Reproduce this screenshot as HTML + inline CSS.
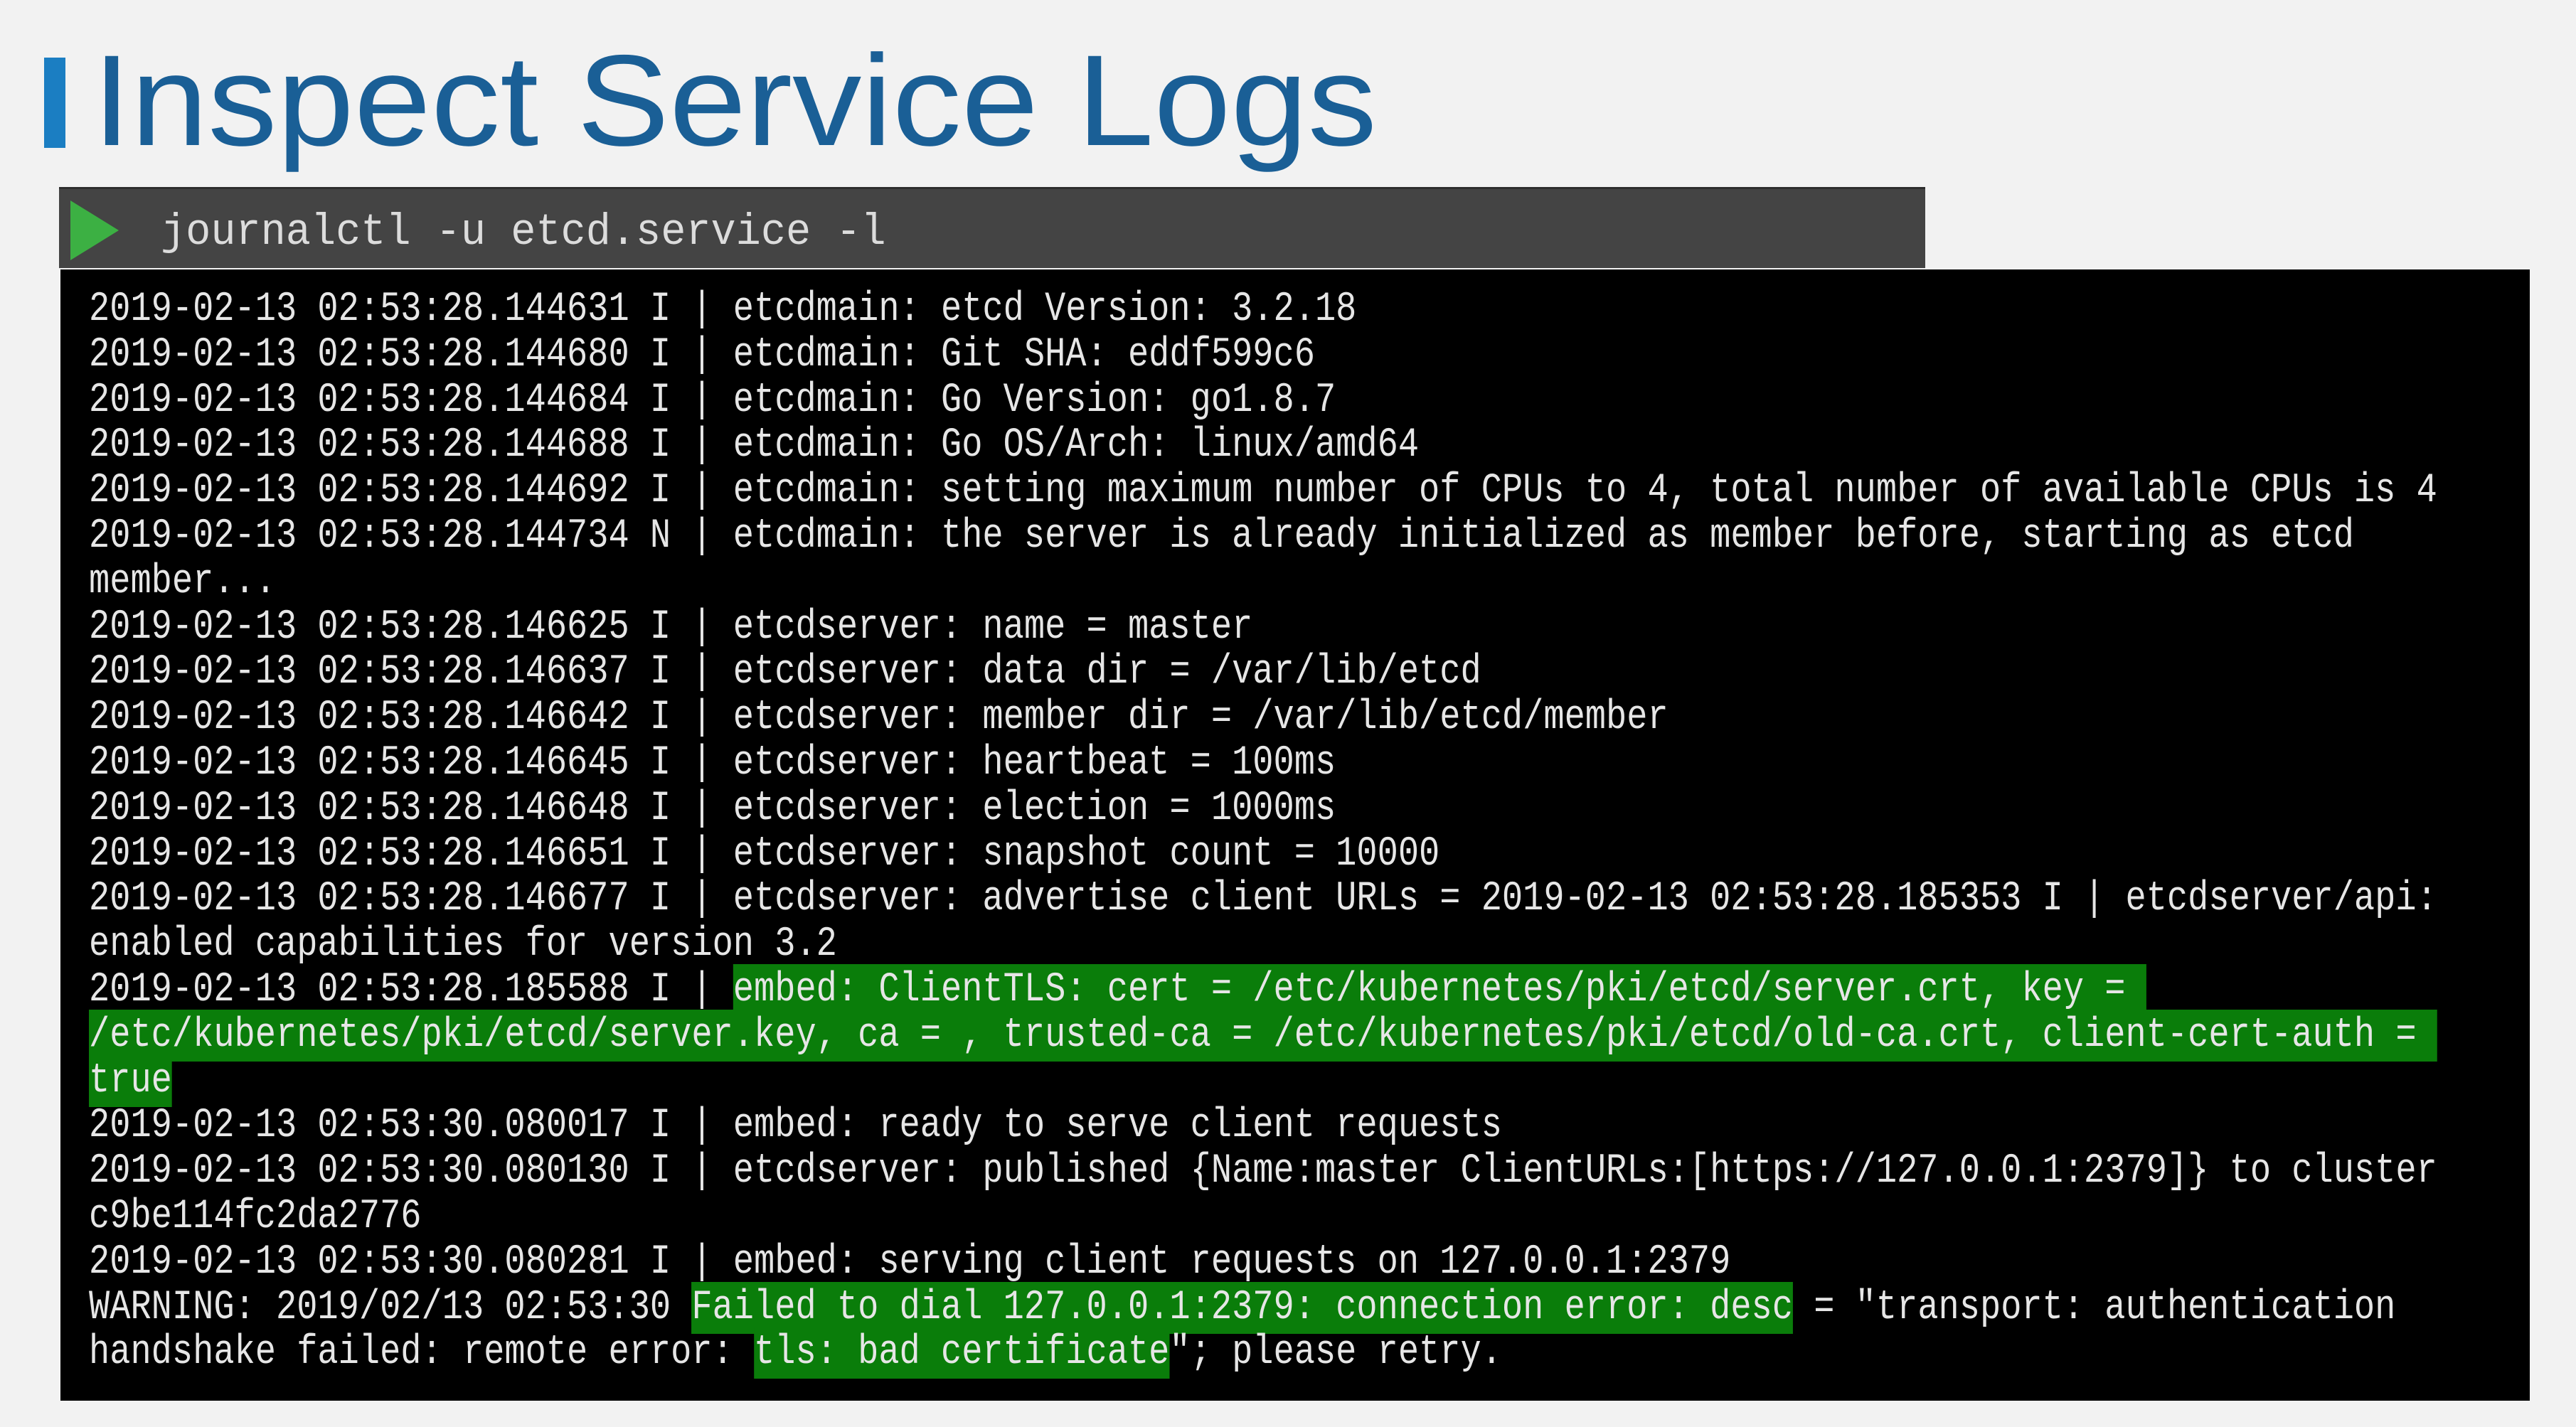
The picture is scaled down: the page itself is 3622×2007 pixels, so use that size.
<!DOCTYPE html>
<html><head><meta charset="utf-8"><style>
html,body{margin:0;padding:0;}
body{width:3622px;height:2007px;background:#f2f2f2;position:relative;overflow:hidden;}
.bar{position:absolute;left:62px;top:81px;width:30px;height:127px;background:#1b7ec2;}
.cmd{position:absolute;left:83px;top:263px;width:2624px;height:114px;background:#444;border-top:3px solid #2e2e2e;box-sizing:border-box;}
.tri{position:absolute;left:99px;top:282px;width:0;height:0;border-top:42px solid transparent;border-bottom:42px solid transparent;border-left:68px solid #3cb043;}
.cmdt{position:absolute;left:226px;top:292px;font-family:"Liberation Mono",monospace;font-size:62px;line-height:70px;color:#dcdcdc;white-space:pre;transform:scaleX(0.945);transform-origin:left top;}
.term{position:absolute;left:85px;top:379px;width:3472px;height:1591px;background:#000;}
pre{position:absolute;left:125px;top:404px;margin:0;font-family:"Liberation Mono",monospace;font-size:58px;line-height:63.8px;color:#e6e6e6;white-space:pre;transform:scaleX(0.8395);transform-origin:left top;}
.g{background:#0a7d0a;padding:4px 0;}
</style></head><body>
<div class="bar"></div>
<svg style="position:absolute;left:0;top:0" width="3622" height="260"><text x="130" y="204" font-family="Liberation Sans, sans-serif" font-size="182" fill="#1a5f96" textLength="1806" lengthAdjust="spacingAndGlyphs">Inspect Service Logs</text></svg>
<div class="cmd"></div>
<div class="tri"></div>
<div class="cmdt">journalctl -u etcd.service -l</div>
<div class="term"></div>
<pre>2019-02-13 02:53:28.144631 I | etcdmain: etcd Version: 3.2.18
2019-02-13 02:53:28.144680 I | etcdmain: Git SHA: eddf599c6
2019-02-13 02:53:28.144684 I | etcdmain: Go Version: go1.8.7
2019-02-13 02:53:28.144688 I | etcdmain: Go OS/Arch: linux/amd64
2019-02-13 02:53:28.144692 I | etcdmain: setting maximum number of CPUs to 4, total number of available CPUs is 4
2019-02-13 02:53:28.144734 N | etcdmain: the server is already initialized as member before, starting as etcd
member...
2019-02-13 02:53:28.146625 I | etcdserver: name = master
2019-02-13 02:53:28.146637 I | etcdserver: data dir = /var/lib/etcd
2019-02-13 02:53:28.146642 I | etcdserver: member dir = /var/lib/etcd/member
2019-02-13 02:53:28.146645 I | etcdserver: heartbeat = 100ms
2019-02-13 02:53:28.146648 I | etcdserver: election = 1000ms
2019-02-13 02:53:28.146651 I | etcdserver: snapshot count = 10000
2019-02-13 02:53:28.146677 I | etcdserver: advertise client URLs = 2019-02-13 02:53:28.185353 I | etcdserver/api:
enabled capabilities for version 3.2
2019-02-13 02:53:28.185588 I | <span class="g">embed: ClientTLS: cert = /etc/kubernetes/pki/etcd/server.crt, key = </span>
<span class="g">/etc/kubernetes/pki/etcd/server.key, ca = , trusted-ca = /etc/kubernetes/pki/etcd/old-ca.crt, client-cert-auth = </span>
<span class="g">true</span>
2019-02-13 02:53:30.080017 I | embed: ready to serve client requests
2019-02-13 02:53:30.080130 I | etcdserver: published {Name:master ClientURLs:[https://127.0.0.1:2379]} to cluster
c9be114fc2da2776
2019-02-13 02:53:30.080281 I | embed: serving client requests on 127.0.0.1:2379
WARNING: 2019/02/13 02:53:30 <span class="g">Failed to dial 127.0.0.1:2379: connection error: desc</span> = "transport: authentication
handshake failed: remote error: <span class="g">tls: bad certificate</span>"; please retry.</pre>
</body></html>
